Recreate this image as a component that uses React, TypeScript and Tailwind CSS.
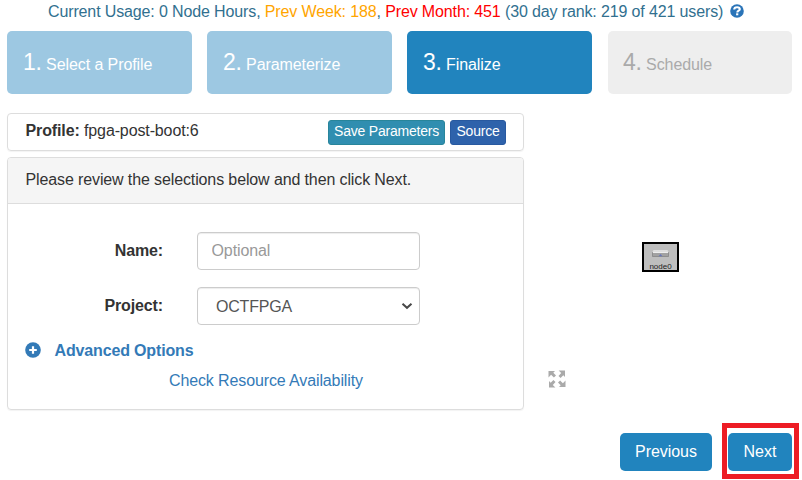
import React from "react";

const steps = [
  { n: 1, label: "Select a Profile", style: "w-[185px] pl-4 bg-[#9dc8e2] text-white" },
  { n: 2, label: "Parameterize", style: "w-[185px] pl-4 bg-[#9dc8e2] text-white" },
  { n: 3, label: "Finalize", style: "w-[185px] pl-4 bg-[#2184be] text-white" },
  { n: 4, label: "Schedule", style: "ml-px w-[184px] pl-[15px] bg-[#eeeeee] text-[#aaaaaa]" },
];

function UsageBar() {
  return (
    <div className="flex h-[31px] items-start pl-12 text-[#31708f]">
      <div className="whitespace-pre pt-px leading-[22px] tracking-[-0.13px]">
        Current Usage: 0 Node Hours, <span className="text-[#ffa500]">Prev Week: 188</span>,{" "}
        <span className="text-[#ff0000]">Prev Month: 451</span> (30 day rank: 219 of 421 users)
      </div>
      <svg className="ml-[7px] mt-[4px] size-[14px]" viewBox="0 0 14 14">
        <circle cx="7" cy="7" r="6.8" fill="#2a74b8" />
        <path d="M4.2 5.6C4.2 3.9 5.5 3.2 7.1 3.2s2.7.8 2.7 2.1c0 1.4-2.5 1.5-2.5 3.1" fill="none" stroke="#fff" strokeWidth="2.1" />
        <path d="M6.1 9.3h2.2v2H6.1z" fill="#fff" />
      </svg>
    </div>
  );
}

function Wizard() {
  return (
    <nav className="flex gap-[15px] pl-[7px]">
      {steps.map((s) => (
        <div key={s.n} className={`h-[63px] rounded-[5px] pt-[15px] leading-[33px] ${s.style}`}>
          <span className="text-[23px] leading-[33px] tracking-[-0.3px]">{s.n}.</span>{" "}
          <span className="tracking-[-0.08px]">{s.label}</span>
        </div>
      ))}
    </nav>
  );
}

function ReviewForm() {
  return (
    <section className="mt-1.5 h-[253px] rounded-[4px] border border-[#dddddd] shadow-[0_1px_1px_rgba(0,0,0,0.05)]">
      <header className="h-[46px] rounded-t-[3px] border-b border-[#dddddd] bg-[#f5f5f5] pl-[17.5px] leading-[44px] tracking-[-0.12px]">
        Please review the selections below and then click Next.
      </header>
      <div className="flex h-[38px] mt-7 items-center">
        <label className="w-[155px] text-right font-bold tracking-[-0.15px]">Name:</label>
        <input
          className="ml-[34px] h-[38px] w-[223px] rounded-[4px] border border-[#cccccc] px-[13.5px] pb-px tracking-[-0.1px] shadow-[inset_0_1px_1px_rgba(0,0,0,0.075)] placeholder:text-[#999999]"
          placeholder="Optional"
        />
      </div>
      <div className="mt-[17px] flex h-[38px] items-center">
        <label className="w-[155px] pb-px text-right font-bold tracking-[-0.12px]">Project:</label>
        <button className="ml-[34px] flex h-[38px] w-[223px] items-center justify-between rounded-[4px] border border-[#cccccc] pl-[18px] pr-[6px] text-[#555555] shadow-[inset_0_1px_1px_rgba(0,0,0,0.075)]">
          <span className="pt-0.5 tracking-[-0.2px]">OCTFPGA</span>
          <svg className="h-[8px] w-[12px]" viewBox="0 0 12 8">
            <path d="M1.5 1.8 6 5.8l4.5-4" fill="none" stroke="#484848" strokeWidth="2" />
          </svg>
        </button>
      </div>
      <div className="mt-[14px] flex h-[22px] items-center text-[#337ab7]">
        <svg className="ml-[17px] size-4" viewBox="0 0 16 16">
          <circle cx="8" cy="8" r="7.8" fill="currentColor" />
          <path d="M8 4.2v7.6M4.2 8h7.6" stroke="#fff" strokeWidth="2.2" />
        </svg>
        <b className="ml-[13.5px] pt-0.5 tracking-[-0.15px]">Advanced Options</b>
      </div>
      <a className="ml-[161px] mt-[9px] block leading-[22px] tracking-[-0.12px] text-[#337ab7]">Check Resource Availability</a>
    </section>
  );
}

function NodeTile() {
  return (
    <svg className="ml-[118px] mt-[129px] block h-[30px] w-[37px]" viewBox="0 0 37 30">
      <rect x="1" y="1" width="35" height="28" fill="#bebebe" stroke="#000" strokeWidth="2" />
      <path d="M11.5 8h14l1.5 3H10z" fill="#dedede" />
      <path d="M10.5 10.5h16v4h-16z" fill="#a2a2a2" stroke="#777" strokeWidth=".6" />
      <path d="M11 10.5h15" stroke="#eee" />
      <path d="m16.5 14.3 2-2.3 2 2.3z" fill="#6878bb" />
      <text x="18.5" y="27.3" textAnchor="middle" fontSize="8" fill="#222" className="font-['Liberation_Sans',Arial,sans-serif]">node0</text>
    </svg>
  );
}

function Topology() {
  return (
    <aside className="h-[297px] grow">
      <NodeTile />
      <svg className="ml-6 mt-[98px] block h-[18px] w-[18px]" viewBox="0 0 18 18" fill="#aaa">
        {[0, 90, 180, 270].map((a) => (
          <g key={a} transform={`rotate(${a} 9 9)`}>
            <path d="M.5 1H7L5.3 2.7 8 5.4 5.9 7.5 3.1 4.8.5 7.4z" />
          </g>
        ))}
      </svg>
    </aside>
  );
}

export default function App() {
  return (
    <main className="h-[480px] w-[802px] overflow-hidden bg-white font-['Liberation_Sans',Arial,sans-serif] text-base text-[#333333]">
      <UsageBar />
      <Wizard />
      <div className="mt-[19px] flex pl-[7px]">
        <div className="w-[517px]">
          <section className="flex h-[38px] items-start rounded-[4px] border border-[#dddddd] shadow-[0_1px_1px_rgba(0,0,0,0.05)]">
            <div className="grow pl-[17.5px] leading-[34px] tracking-[-0.12px]"><b>Profile:</b> fpga-post-boot:6</div>
            <button className="mt-1.5 h-[25px] w-[117px] whitespace-nowrap rounded-[3px] border border-[#28859b] bg-[#308eb0] pb-0.5 text-[14px] leading-[21px] tracking-[-0.22px] text-white">Save Parameters</button>
            <button className="ml-[5px] mr-[17px] mt-1.5 h-[25px] w-14 rounded-[3px] border border-[#2859a0] bg-[#2e62ab] pb-0.5 text-[14px] leading-[21px] tracking-[-0.2px] text-white">Source</button>
          </section>
          <ReviewForm />
        </div>
        <Topology />
      </div>
      <footer className="flex items-start pl-[620px] pt-[13px]">
        <button className="mt-2.5 h-[38px] w-[92px] rounded-[5px] bg-[#2184be] pb-px tracking-[-0.05px] text-white">Previous</button>
        <div className="ml-[10px] h-14 w-[77px] border-[5px] border-[#ed1c24] pl-px pt-[5px]">
          <button className="h-[38px] w-16 rounded-[5px] bg-[#2184be] pb-px text-white">Next</button>
        </div>
      </footer>
    </main>
  );
}
